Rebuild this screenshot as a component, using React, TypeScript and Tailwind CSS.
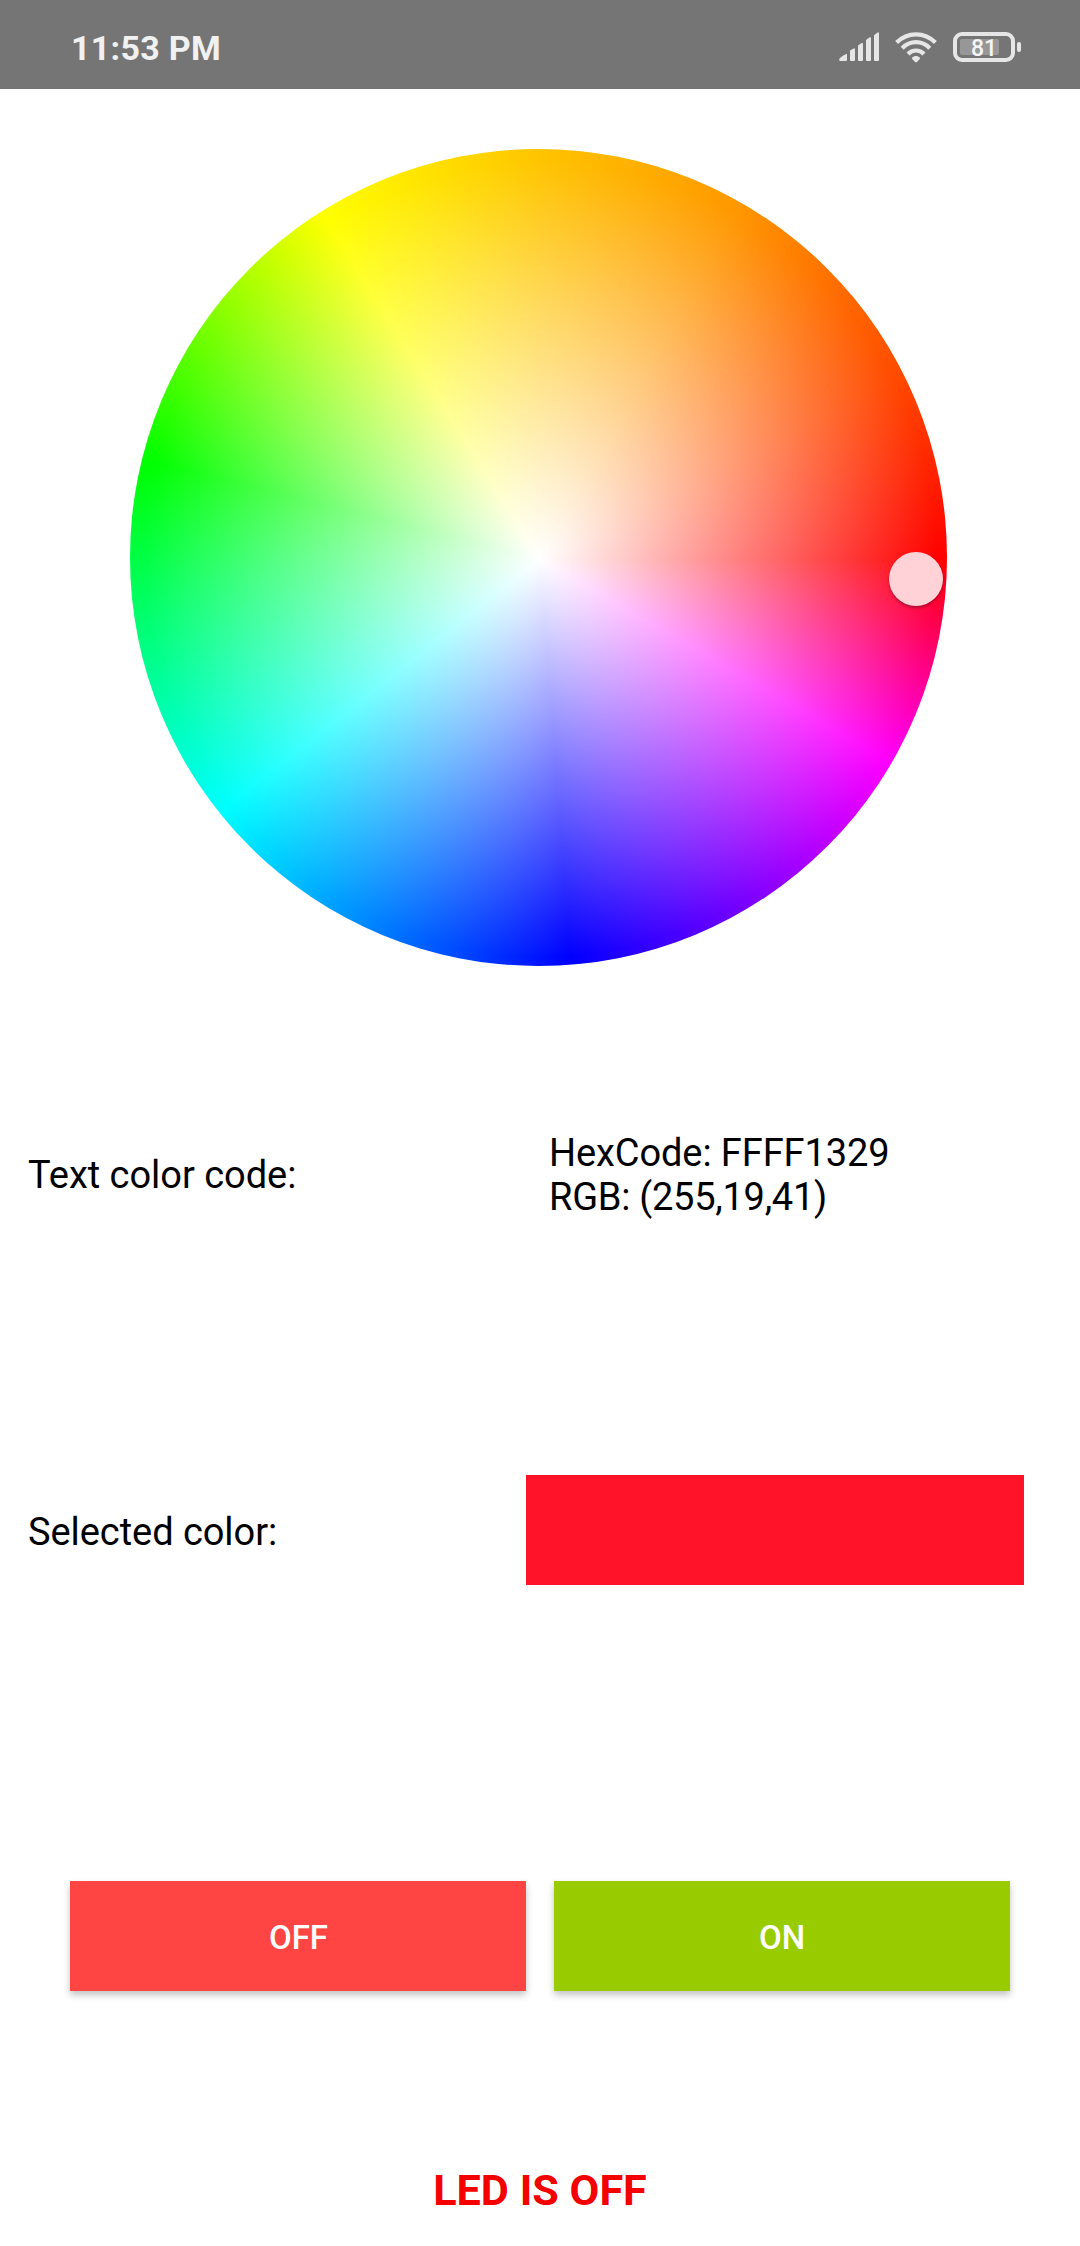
import React from "react";

function SignalIcon() {
  return (
    <svg width="41" height="30" viewBox="0 0 41 30" fill="#e6e6e6">
      <path d="M8 21.800V28a1 1 0 0 1-1 1H1.600C0 29-.2 27.200 .8 26.300C2.500 24.600 5 22.800 8 21.800Z" />
      <path d="M11 18.600L14.700 16.400Q16 16 16 17.400V28q0 1-1 1h-3q-1 0-1-1Z" />
      <path d="M19 13.600L22.700 11.100Q24 10.600 24 12V28q0 1-1 1h-3q-1 0-1-1Z" />
      <path d="M27 8L30.700 5.300Q32 4.800 32 6.200V28q0 1-1 1h-3q-1 0-1-1Z" />
      <path d="M35 3.200L38.700 .400Q40 -.2 40 1.200V28q0 1-1 1h-3q-1 0-1-1Z" />
    </svg>
  );
}

function WifiIcon() {
  return (
    <svg width="42" height="31" viewBox="0 0 42 31" fill="none" stroke="#e6e6e6" strokeWidth="4.200">
      <path d="M1.600 10.600C12.500-.4 29.500-.4 40.400 10.600" />
      <path d="M7.200 16.200C15 8.200 27 8.200 34.800 16.200" />
      <path d="M13 22C17.500 17.300 24.500 17.300 29 22" />
      <path d="M21 24c1.500 0 2.800.5 3.800 1.600c.4.500.4 1 0 1.400L22.200 29.700c-.7.700-1.700.7-2.400 0L17.200 27c-.4-.4-.4-.9 0-1.400C18.200 24.500 19.500 24 21 24Z" fill="#e6e6e6" stroke="none" />
    </svg>
  );
}

function BatteryIcon() {
  return (
    <div className="flex items-center gap-[2px]">
      <div className="flex h-[30px] w-[62px] rounded-[9px] border-4 border-[#e6e6e6] p-[3px]">
        <div className="flex h-4 w-[39px] items-center rounded-[2px] bg-[#979797] pl-[11px] text-[23px] leading-none font-medium text-[#f5f5f5]">
          <span className="relative top-px">81</span>
        </div>
      </div>
      <div className="h-[10px] w-1 rounded-[2px] bg-[#e6e6e6]" />
    </div>
  );
}

function ColorWheel() {
  return (
    <div className="relative mt-[60px] ml-[130px] h-[817px] w-[817px] shrink-0">
      <div className="size-full rounded-full bg-[radial-gradient(circle_at_410px_410px,rgba(255,255,255,1)_0px,rgba(255,255,255,0)_398px),conic-gradient(from_90deg_at_410px_410px,#ff0000_0deg,#ff00ff_30.2deg,#0000ff_85.700deg,#00ffff_141.700deg,#00ff00_194deg,#ffff00_237.800deg,#ffc400_270deg,#ff9800_299deg,#ff7100_316deg,#ff4a00_333deg,#ff0000_360deg)]" />
      <div className="absolute top-[403px] left-[759px] size-[54px] rounded-full bg-[#ffd2d8] shadow-[0_2px_3px_rgba(0,0,0,0.3)]" />
    </div>
  );
}

export default function App() {
  return (
    <div className="flex h-[2246px] w-[1080px] flex-col overflow-hidden bg-white font-[Roboto,sans-serif] text-black">
      <header className="flex h-[89px] shrink-0 items-center justify-between bg-[#757575] pt-[5px] pr-[59px] pl-[71px]">
        <span className="pt-px text-[34px] leading-10 font-bold tracking-[0.3px] text-[#f1f1f1]">11:53 PM</span>
        <div className="flex items-center">
          <SignalIcon />
          <div className="ml-[15px]"><WifiIcon /></div>
          <div className="ml-4"><BatteryIcon /></div>
        </div>
      </header>

      <ColorWheel />

      <section className="mt-[164px] ml-7 flex h-[90px] shrink-0 items-center text-[38px] leading-[44px]">
        <p className="w-[521px] tracking-[-0.03px]">Text color code:</p>
        <p>
          <span className="block tracking-[-0.1px]">HexCode: FFFF1329</span>
          <span className="block tracking-[-0.27px]">RGB: (255,19,41)</span>
        </p>
      </section>

      <section className="mt-[255px] mr-14 ml-7 flex h-[110px] shrink-0 items-center text-[38px] leading-[44px]">
        <p className="w-[498px] pt-1 tracking-[-0.06px]">Selected color:</p>
        <div className="h-full flex-1 bg-[#ff1329]" />
      </section>

      <div className="mx-[70px] mt-[296px] grid h-[110px] shrink-0 grid-cols-2 gap-7 text-[33px] font-medium text-white">
        <button className="bg-[#ff4444] pt-[3px] pl-px shadow-[0_4px_7px_rgba(0,0,0,0.24)]">OFF</button>
        <button className="bg-[#99cc00] pt-[3px] shadow-[0_4px_7px_rgba(0,0,0,0.24)]">ON</button>
      </div>

      <p className="mt-[174px] text-center text-[43.200px] leading-[52px] font-bold text-[#f50000]">LED IS OFF</p>
    </div>
  );
}
